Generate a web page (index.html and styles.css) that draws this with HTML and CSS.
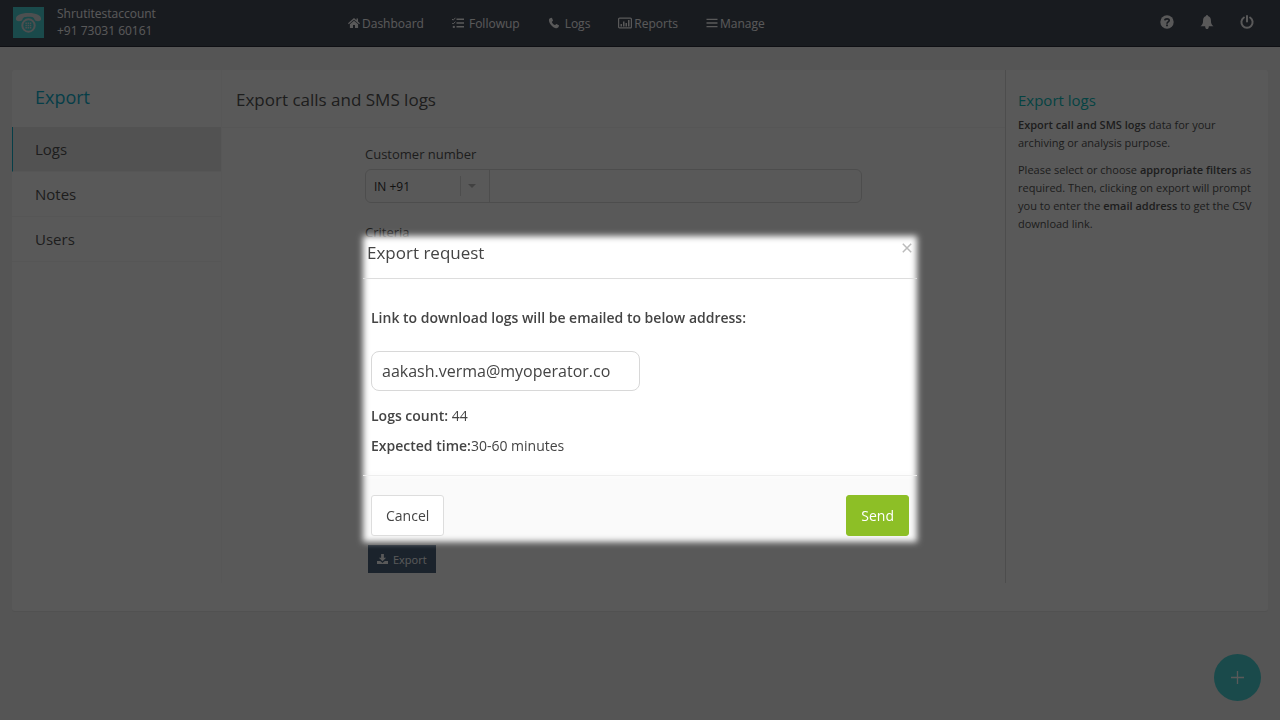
FILE: index.html
```html
<!DOCTYPE html>
<html lang="en">
<head>
  <meta charset="UTF-8">
  <meta name="viewport" content="width=device-width, initial-scale=1.0">
  <title>Export</title>
  <link rel="stylesheet" href="styles.css">
</head>
<body>

  <header class="topbar">
    <div class="account">
      <svg class="logo" viewBox="0 0 31 31">
        <path fill="#dde3e4" d="M3 12.800C2 8.200 8 6 15.500 6S29 8.200 28 12.800C27.500 14.800 22 14.500 21.500 12.600C21.200 10.400 19.500 9.800 15.500 9.800S9.800 10.400 9.500 12.600C9 14.500 3.500 14.800 3 12.800Z"/>
        <circle cx="15.500" cy="18.500" r="6.200" fill="none" stroke="#dde3e4" stroke-width="2"/>
        <path stroke="#dde3e4" stroke-width="1.500" stroke-dasharray="1.500 .7" d="M12.400 16.300h6.400M12.400 18.500h6.400M12.400 20.700h6.400"/>
      </svg>
      <div class="account-text">Shrutitestaccount<br>+91 73031 60161</div>
    </div>

    <nav class="menu">
      <a href="#"><svg class="icon-home" viewBox="0 0 12 12"><path d="M6 1 0 6.300l.8.900L6 2.700l5.200 4.500.8-.9-2-1.800V1.500H8.500v1.700zM6 3.700 1.900 7.200V11H5V8h2v3h3.100V7.200z"/></svg>Dashboard</a>
      <a href="#" class="followup"><svg viewBox="0 0 12 12"><path d="M4.500 1.500H12V3H4.500zM4.500 5.300H12v1.500H4.500zM4.500 9.100H12v1.500H4.500z"/><path fill="none" stroke="#fff" stroke-width="1" d="m0 2 1.200 1.200L3.400.8M0 5.800 1.200 7l2.200-2.400"/><path d="M.8 8.900h2v2h-2z"/></svg>Followup</a>
      <a href="#" class="calls"><svg viewBox="0 0 12 12"><path d="M3.200.8 1.600 1.600C.6 2.400.8 4.300 1.800 6.200c1.200 2.200 3 3.900 5.200 4.700 1.500.5 2.900.4 3.500-.8l.6-1.500-2.500-1.500c-.6-.2-1 .9-1.500 1C5.800 7.800 4.200 6 3.900 4.900c.1-.5 1.200-.8 1.100-1.400L4 1.100z"/></svg>Logs</a>
      <a href="#"><svg class="icon-chart" viewBox="0 0 14 12"><rect x=".6" y="1.100" width="12.800" height="9.800" rx="1" fill="none" stroke="#fff" stroke-width="1.200"/><path d="M2.500 7H4v2.500H2.500zM5 4.500h1.500v5H5zM7.500 6H9v3.500H7.500zM10 3h1.500v6.500H10z"/></svg>Reports</a>
      <a href="#"><svg viewBox="0 0 12 12"><path d="M.5 1.700h11v1.400H.5zM.5 5.300h11v1.400H.5zM.5 8.900h11v1.400H.5z"/></svg>Manage</a>
    </nav>

    <div class="tools">
      <a href="#" aria-label="Help"><svg viewBox="0 0 14 14"><circle cx="7" cy="7" r="6.700"/><path fill="none" stroke="#454d5b" stroke-width="1.700" d="M4.800 5.400C5 3.300 9.300 3.300 9.200 5.500 9.100 7 7 6.800 7 8.700"/><path fill="#454d5b" d="M6.100 9.500h1.800v1.700H6.100z"/></svg></a>
      <a href="#" aria-label="Notifications"><svg viewBox="0 0 14 15"><path d="M7 0c.7 0 1 .5 1 1.100 2.500.6 3.200 2.500 3.200 4.700 0 3 .8 4.700 2.800 6.200H9C8.900 14.300 8 15 7 15s-1.900-.7-2-3H0c2-1.500 2.800-3.200 2.800-6.200C2.800 3.600 3.500 1.700 6 1.100 6 .5 6.300 0 7 0z"/></svg></a>
      <a href="#" aria-label="Log out"><svg viewBox="0 0 14 14"><path fill="none" stroke="#fff" stroke-width="2" stroke-linecap="round" d="M3.900 2.500a5.600 5.600 0 1 0 6.200 0M7 1v5.500"/></svg></a>
    </div>
  </header>

  <main class="panel">
    <aside class="sidebar">
      <h1>Export</h1>
      <a href="#" class="active">Logs</a>
      <a href="#">Notes</a>
      <a href="#">Users</a>
    </aside>

    <section class="content">
      <h2>Export calls and SMS logs</h2>
      <form class="filters">
        <label for="number">Customer number</label>
        <div class="phone">
          <select id="country" aria-label="Country code">
            <option>IN +91</option>
          </select>
          <span class="caret"></span>
          <input type="text" id="number">
        </div>
        <div class="criteria">Criteria</div>
        <button type="button" class="export"><svg viewBox="0 0 12 12"><path d="M4.500 0h3v4H10L6 8 2 4h2.500zM0 7.500h3.500L6 9.700l2.500-2.200H12V11H0z"/></svg>Export</button>
      </form>
    </section>

    <aside class="help">
      <h3>Export logs</h3>
      <p><b>Export call and SMS logs</b> data for your archiving or analysis purpose.</p>
      <p>Please select or choose <b>appropriate filters</b> as required. Then, clicking on export will prompt you to enter the <b>email address</b> to get the CSV download link.</p>
    </aside>
  </main>

  <button class="fab" aria-label="Add"><svg viewBox="0 0 14 14"><path d="M6.300 0h1.400v6.300H14v1.400H7.700V14H6.300V7.700H0V6.300h6.300z"/></svg></button>

  <!-- Export request popup -->
  <div class="overlay">
    <div class="modal" role="dialog" aria-labelledby="modalTitle">
      <div class="modal-header">
        <h2 id="modalTitle">Export request</h2>
        <button class="close" aria-label="Close"><svg viewBox="0 0 10 10"><path d="m.8.800 8.400 8.400M9.200.8.800 9.200"/></svg></button>
      </div>
      <div class="modal-body">
        <label for="email">Link to download logs will be emailed to below address:</label>
        <input type="text" id="email" value="aakash.verma@myoperator.co">
        <p><b>Logs count:</b> 44</p>
        <p><b>Expected time:</b>30-60 minutes</p>
      </div>
      <div class="modal-footer">
        <button class="cancel">Cancel</button>
        <button class="send">Send</button>
      </div>
    </div>
  </div>

</body>
</html>
```
FILE: styles.css
```css
* {
  box-sizing: border-box;
}

body {
  margin: 0;
  min-height: 100vh;
  background-color: #f3f3f3;
  font-family: 'Open Sans', sans-serif;
  font-size: 14px;
  color: #555;
}

h1, h2, h3, p {
  margin: 0;
  font-weight: normal;
}

a {
  color: inherit;
  text-decoration: none;
}

b {
  font-weight: 600;
}

button, input, select {
  font-family: inherit;
  cursor: pointer;
}

/* Top bar */
.topbar {
  display: flex;
  align-items: center;
  height: 47px;
  padding: 0 26px 2px 13px;
  background-color: #454d5b;
  border-bottom: 1px solid #2b303a;
  color: #fff;
}

.topbar a svg {
  fill: #fff;
}

.account {
  display: flex;
  align-items: center;
  gap: 13px;
  width: 335px;
}

.logo {
  width: 31px;
  height: 31px;
  background-color: #4cd3d6;
}

.account-text {
  font-size: 12px;
  line-height: 17px;
}

.menu {
  display: flex;
  gap: 28px;
  flex: 1;
  padding-top: 2px;
  font-size: 12px;
}

.menu a {
  display: flex;
  align-items: center;
  gap: 2px;
}

.menu svg {
  width: 12px;
  height: 12px;
}

.menu .icon-chart {
  width: 14px;
}

.menu .followup, .menu .calls {
  gap: 5px;
}

.tools {
  display: flex;
  gap: 26px;
}

.tools svg {
  display: block;
  width: 14px;
  height: 14px;
}

/* Main panel */
.panel {
  display: grid;
  grid-template-columns: 210px 1fr 263px;
  margin: 23px 12px 0;
  padding-bottom: 28px;
  background-color: #fff;
  border-radius: 3px;
  box-shadow: 0 1px 1px rgba(0, 0, 0, 0.05);
}

.sidebar {
  border-right: 1px solid #fafafa;
}

.sidebar h1 {
  height: 57px;
  padding-left: 23px;
  font-size: 18px;
  line-height: 54px;
  color: #12b2cf;
}

.sidebar a {
  display: block;
  padding-left: 23px;
  border-bottom: 1px solid #f6f6f6;
  font-size: 15px;
  line-height: 44px;
}

.sidebar .active {
  padding-left: 22px;
  border-left: 1px solid #12b2cf;
  background-color: #ececec;
}

.content h2 {
  padding: 2px 0 0 14px;
  border-bottom: 1px solid #f6f6f6;
  font-size: 17px;
  line-height: 55px;
}

.filters {
  padding: 16px 143px 10px;
}

.filters label, .criteria {
  display: block;
  font-size: 13px;
  line-height: 20px;
}

.phone {
  display: flex;
  align-items: center;
  height: 34px;
  margin: 5px 0 19px;
  border: 1px solid #ddd;
  border-radius: 6px;
}

.phone select {
  width: 95px;
  height: 20px;
  padding: 0 8px;
  appearance: none;
  background: none;
  border: none;
  border-right: 1px solid #ddd;
  font-size: 12px;
  color: #333;
}

.caret {
  margin: 0 13px 0 7px;
  border: 4px solid transparent;
  border-top-color: #bbb;
  border-bottom: none;
}

.phone input {
  flex: 1;
  align-self: stretch;
  background: none;
  border: none;
  border-left: 1px solid #ddd;
}

.criteria {
  min-height: 323px;
}

.export {
  display: flex;
  align-items: center;
  gap: 5px;
  height: 28px;
  margin-left: 3px;
  padding: 0 9px;
  border: none;
  background-color: #4d657f;
  font-size: 11px;
  color: #fff;
}

.export svg {
  width: 11px;
  height: 11px;
  fill: #fff;
}

.help {
  padding: 20px 12px 0;
  border-left: 1px solid #ddd;
  font-size: 11px;
  line-height: 18px;
}

.help h3 {
  font-size: 15px;
  line-height: 20px;
  margin-bottom: 6px;
  color: #10bfc0;
}

.help p {
  margin-bottom: 9px;
}

.fab {
  position: fixed;
  right: 19px;
  bottom: 19px;
  display: flex;
  align-items: center;
  justify-content: center;
  width: 47px;
  height: 47px;
  padding: 0;
  border: none;
  border-radius: 50%;
  background-color: #4cd3d6;
}

.fab svg {
  width: 13px;
  fill: #fff;
}

/* Popup */
.overlay {
  position: fixed;
  inset: 0;
  padding-top: 236px;
  background-color: rgba(0, 0, 0, 0.65);
}

.modal {
  position: relative;
  width: 554px;
  margin: 0 auto;
  color: #444;
}

/* soft edges round the popup */
.modal::before {
  content: "";
  position: absolute;
  inset: 0;
  z-index: -1;
  background: linear-gradient(#fff 239px, #fafafa 239px);
  filter: blur(3px);
}

.modal-header {
  display: flex;
  justify-content: space-between;
  height: 43px;
  padding: 7px 5px 0 4px;
  border-bottom: 1px solid #ddd;
}

.modal-header h2 {
  font-size: 17px;
  line-height: 20px;
}

.close {
  width: 10px;
  height: 10px;
  padding: 0;
  border: none;
  background: none;
}

.close svg {
  display: block;
  fill: none;
  stroke: #bbb;
  stroke-width: 1.5;
}

.modal-body {
  height: 196px;
  padding: 29px 8px 0;
  font-size: 14px;
  line-height: 20px;
}

.modal-body label {
  display: block;
  margin-bottom: 23px;
  font-weight: 600;
}

.modal-body input {
  display: block;
  width: 269px;
  height: 40px;
  margin-bottom: 15px;
  padding: 0 10px;
  border: 1px solid #d8d8d8;
  border-radius: 8px;
  font-size: 16px;
  color: #444;
}

.modal-body p {
  margin-bottom: 10px;
}

.modal-footer {
  display: flex;
  justify-content: space-between;
  padding: 19px 8px 6px;
  border-top: 1px solid #eee;
}

.modal-footer button {
  height: 41px;
  padding: 0 14px;
  border: 1px solid #ddd;
  border-radius: 3px;
  background-color: #fff;
  font-size: 14px;
  color: #444;
}

.modal-footer .send {
  border-color: #8dbf26;
  background-color: #8dbf26;
  color: #fff;
}
```
